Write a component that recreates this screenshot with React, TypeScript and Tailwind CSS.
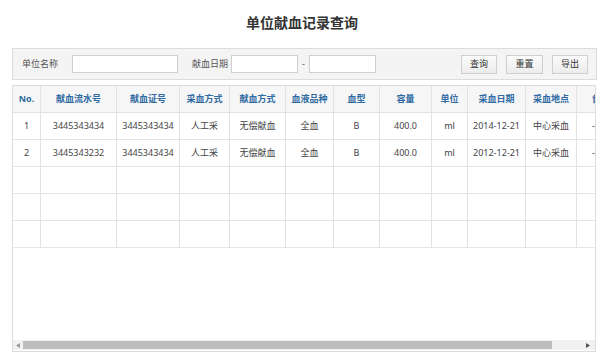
import React from "react";

const cols = [
  { w: 28, h: "No." },
  { w: 76, h: "献血流水号" },
  { w: 63, h: "献血证号" },
  { w: 50, h: "采血方式" },
  { w: 56, h: "献血方式" },
  { w: 48, h: "血液品种" },
  { w: 46, h: "血型" },
  { w: 52, h: "容量" },
  { w: 36, h: "单位" },
  { w: 58, h: "采血日期" },
  { w: 51, h: "采血地点" },
  { w: 60, h: "备注" },
];

const rows: string[][] = [
  ["1", "3445343434", "3445343434", "人工采", "无偿献血", "全血", "B", "400.0", "ml", "2014-12-21", "中心采血", "-"],
  ["2", "3445343232", "3445343434", "人工采", "无偿献血", "全血", "B", "400.0", "ml", "2012-12-21", "中心采血", "-"],
  ["", "", "", "", "", "", "", "", "", "", "", ""],
  ["", "", "", "", "", "", "", "", "", "", "", ""],
  ["", "", "", "", "", "", "", "", "", "", "", ""],
];

function Btn({ label, w }: { label: string; w: number }) {
  return (
    <div
      className="h-[19px] flex items-center justify-center border border-[#cfcfcf] bg-gradient-to-b from-[#fbfbfb] to-[#ececec] text-[9px] text-[#333] box-border"
      style={{ width: w }}
    >
      {label}
    </div>
  );
}

export default function App() {
  return (
    <div
      className="w-[604px] h-[358px] bg-white overflow-hidden"
      style={{ fontFamily: "'Noto Sans', 'Noto Sans CJK SC', sans-serif" }}
    >
      <div className="h-[44px] flex items-center justify-center text-[14px] font-bold text-[#333] pt-[1px]">
        单位献血记录查询
      </div>
      <div className="ml-[12px] w-[585px] h-[32px] mt-[4px] border border-[#dcdcdc] bg-[#f4f4f4] flex items-center box-border pl-[9px] pr-[8px]">
        <div className="w-[50px] text-[9px] text-[#555]">单位名称</div>
        <div className="w-[106px] h-[18px] border border-[#cfcfcf] bg-white box-border" />
        <div className="ml-[14px] w-[39px] text-[9px] text-[#555]">献血日期</div>
        <div className="w-[67px] h-[18px] border border-[#cfcfcf] bg-white box-border" />
        <div className="w-[11px] text-center text-[9px] text-[#555]">-</div>
        <div className="w-[67px] h-[18px] border border-[#cfcfcf] bg-white box-border" />
        <div className="ml-auto flex gap-[9px]">
          <Btn label="查询" w={36} />
          <Btn label="重置" w={37} />
          <Btn label="导出" w={36} />
        </div>
      </div>
      <div className="ml-[12px] w-[584px] h-[267px] mt-[5px] border border-[#dcdcdc] box-border flex flex-col">
        <div className="flex-1 overflow-hidden">
          <div className="w-max">
            <div className="flex h-[27px] bg-[#f6f6f6] border-b border-[#e2e2e2] box-border">
              {cols.map((c, i) => (
                <div
                  key={i}
                  className={`h-full border-r border-[#e2e2e2] box-border flex items-center text-[9px] font-bold text-[#2f6aa3] ${
                    i === cols.length - 1 ? "justify-start pl-[15px]" : "justify-center"
                  }`}
                  style={{ width: c.w }}
                >
                  {c.h}
                </div>
              ))}
            </div>
            {rows.map((r, ri) => (
              <div key={ri} className="flex h-[27px] border-b border-[#e6e6e6] box-border">
                {cols.map((c, i) => (
                  <div
                    key={i}
                    className={`h-full border-r border-[#e2e2e2] box-border flex items-center text-[9px] text-[#444] ${
                      i === cols.length - 1 ? "justify-start pl-[15px]" : "justify-center"
                    }`}
                    style={{ width: c.w }}
                  >
                    {r[i]}
                  </div>
                ))}
              </div>
            ))}
          </div>
        </div>
        <div className="h-[10px] mb-[1px] bg-[#f1f1f1] flex items-center">
          <div className="w-[10px] h-full flex items-center justify-center">
            <svg width="4" height="5" viewBox="0 0 4 5">
              <path d="M4 0 L0 2.5 L4 5 Z" fill="#9a9a9a" />
            </svg>
          </div>
          <div className="w-[529px] h-[8px] bg-[#bdbdbd]" />
          <div className="flex-1" />
          <div className="w-[10px] h-full flex items-center justify-center mr-[2px]">
            <svg width="4" height="5" viewBox="0 0 4 5">
              <path d="M0 0 L4 2.5 L0 5 Z" fill="#505050" />
            </svg>
          </div>
        </div>
      </div>
    </div>
  );
}
